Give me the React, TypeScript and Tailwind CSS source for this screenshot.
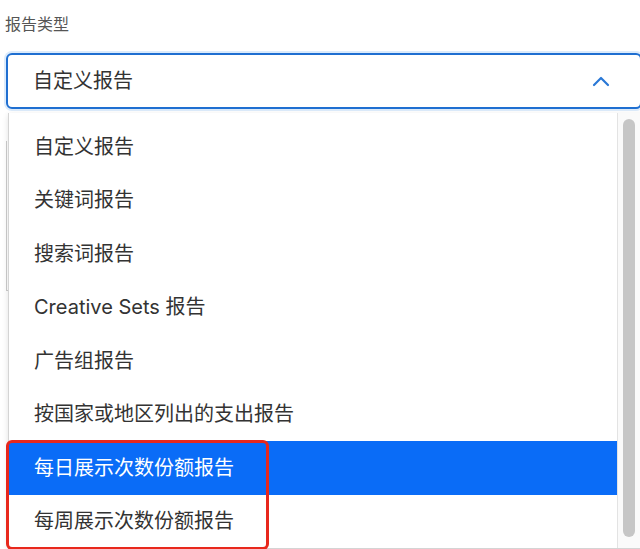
import React from 'react';

const items = [
    '自定义报告',
    '关键词报告',
    '搜索词报告',
    'Creative Sets 报告',
    '广告组报告',
    '按国家或地区列出的支出报告',
];

const marked = ['每日展示次数份额报告', '每周展示次数份额报告'];

const font = { fontFamily: 'Inter, "Noto Sans CJK SC", sans-serif' };

const itemClasses = "h-[53.5px] flex items-center pl-[25px] text-[20px]";

export default function App() {
    return (
        <div className="w-[640px] h-[549px] overflow-hidden bg-white" style={font}>
            <div className="pt-[13px] pl-[5px] text-[16px] leading-[22px] text-[#555]">报告类型</div>
            <div className="relative mt-[16px] ml-[4px] w-[640px]">
                <div className="rounded-[8px] p-[2px] bg-[#dcebfb]">
                    <div className="h-[56px] rounded-[6px] border-2 border-[#1f6fd1] bg-white flex items-center justify-between pl-[25px] pr-[30px]">
                        <span className="text-[20px] text-[#333]">自定义报告</span>
                        <svg width="18" height="12" viewBox="0 0 18 12" fill="none">
                            <path d="M2 10 L9 3 L16 10" stroke="#2a78d6" strokeWidth="2.2" strokeLinecap="round" strokeLinejoin="round" />
                        </svg>
                    </div>
                </div>

                {/* page underneath the open menu */}
                <div className="mt-[30px] ml-[2px] h-[150px] w-[300px] border-l border-[#ccc] border-b" />

                {/* open menu */}
                <div className="absolute left-[4px] top-[62px] w-[640px] h-[436px] bg-white border-l border-b border-[#d4d4d4] shadow-[0_2px_6px_rgba(0,0,0,0.12)] flex">
                    <div className="w-[608px] pt-[7px]">
                        {items.map(t => (
                            <div key={t} className={`${itemClasses} text-[#333]`}>{t}</div>
                        ))}
                        <div className="relative">
                            <div className={`${itemClasses} bg-[#0a6cf7] text-white`}>{marked[0]}</div>
                            <div className={`${itemClasses} text-[#333]`}>{marked[1]}</div>
                            <div className="absolute -left-[3px] -top-[1px] -bottom-[2px] w-[263px] border-[3px] border-[#e8281c] rounded-[6px]" />
                        </div>
                    </div>
                    <div className="w-[24px] border-l border-[#e3e3e3] bg-[#fafafa] pt-[6px] pl-[5px]">
                        <div className="w-[12px] h-[418px] rounded-full bg-[#c6c6c6]" />
                    </div>
                </div>
            </div>
        </div>
    );
}
